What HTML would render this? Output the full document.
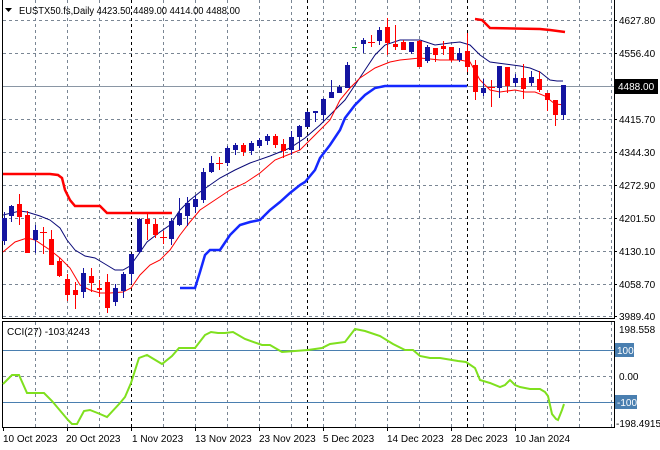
<!DOCTYPE html>
<html><head><meta charset="utf-8"><style>
html,body{margin:0;padding:0;background:#fff;width:660px;height:450px;overflow:hidden}
svg{display:block;font-family:"Liberation Sans",sans-serif}
</style></head><body>
<svg width="660" height="450" viewBox="0 0 660 450" xmlns="http://www.w3.org/2000/svg">
<rect width="660" height="450" fill="#fff"/>
<g stroke="#7a8694" stroke-width="1" stroke-dasharray="3,3" fill="none">
<path d="M35.5 0V317M67.5 0V317M99.5 0V317M163.5 0V317M195.5 0V317M227.5 0V317M259.5 0V317M291.5 0V317M323.5 0V317M355.5 0V317M387.5 0V317M419.5 0V317M451.5 0V317M483.5 0V317M515.5 0V317M547.5 0V317M579.5 0V317M611.5 0V317"/>
<path d="M3 20.5H614M3 53.5H614M3 119.5H614M3 152.5H614M3 185.5H614M3 218.5H614M3 251.5H614M3 284.5H614M3 316.5H614"/>
<path d="M35.5 322V427M67.5 322V427M99.5 322V427M163.5 322V427M195.5 322V427M227.5 322V427M259.5 322V427M291.5 322V427M323.5 322V427M355.5 322V427M387.5 322V427M419.5 322V427M451.5 322V427M483.5 322V427M515.5 322V427M547.5 322V427M579.5 322V427M611.5 322V427"/>
<path d="M3 376.5H614"/>
</g>
<g stroke="#000" stroke-dasharray="3,3"><path d="M131.5 0V317M307.5 0V317M467.5 0V317M131.5 322V427M307.5 322V427M467.5 322V427"/></g>
<path d="M3 86.5H614" stroke="#8a96a4" stroke-width="1"/>
<path d="M3 350.5H614M3 402.5H614" stroke="#4a7fb0" stroke-width="1"/>
<path d="M2.5 0V318.5H614.5V0" fill="none" stroke="#000"/>
<rect x="2.5" y="321.5" width="612" height="106" fill="none" stroke="#000"/>
<polyline fill="none" stroke="#f00" stroke-width="2.5" points="3,174 50,174 58,175 62,178 65,190 70,200 75,206 100,206 107,213 172,213"/>
<polyline fill="none" stroke="#f00" stroke-width="2.5" points="475,19 482,20 490,28 540,29 550,30 565,32"/>
<polyline fill="none" stroke="#1428ff" stroke-width="2.5" points="180,288 195,288 200,272 205,255 210,250 220,250 230,235 240,225 250,222 260,220 270,210 280,202 290,193 300,185 305,182 315,170 320,158 330,145 340,130 345,118 355,105 365,95 375,88 385,86 467,86"/>
<polyline fill="none" stroke="#0a0a78" stroke-width="1" points="3,215 20,211 27,212 40,216 50,220 60,228 67,240 75,250 85,256 95,258 105,264 115,270 123,270 130,266 138,255 147,242 160,232 170,225 180,210 190,200 200,192 210,185 220,178 235,170 250,163 270,156 290,148 305,138 320,125 335,110 345,100 355,85 365,70 375,55 385,45 400,40 420,40 435,45 450,43 460,42 470,45 480,55 490,62 505,64 520,66 530,68 540,72 550,80 557,81 563,81"/>
<polyline fill="none" stroke="#f00" stroke-width="1" points="3,252 15,242 27,238 35,240 50,250 60,258 70,268 80,285 90,290 100,293 110,293 123,292 131,288 140,275 150,265 160,260 170,250 180,235 190,222 200,210 215,200 230,190 245,183 260,173 275,160 290,154 300,150 315,135 330,120 340,100 350,88 360,78 375,68 390,62 400,60 420,58 440,60 460,60 470,62 480,80 490,90 500,92 515,90 525,92 535,92 545,96 555,104 565,105"/>
<g stroke="#1414a0" fill="#1414a0">
<path d="M4.5 212V245M11.5 205V222M35.5 225V253M83.5 268V298M115.5 284V306M123.5 272V298M131.5 254V284M139.5 218V253M171.5 218V245M179.5 198V226M187.5 197V226M195.5 195V213M203.5 168V203M211.5 156V173M227.5 146V166M235.5 143V155M251.5 141V155M259.5 138V148M267.5 134V145M291.5 131V155M299.5 125V150M307.5 111V127M315.5 111V122M323.5 98V121M331.5 80V98M339.5 85V93M347.5 62V88M363.5 38V53M379.5 27V45M411.5 42V54M427.5 45V63M459.5 48V62M483.5 79V96M499.5 66V98M515.5 74V87M531.5 71V86M563.5 85V120"/>
<g stroke="none">
<rect x="2" y="218" width="5" height="23"/><rect x="9" y="206" width="5" height="10"/><rect x="33" y="230" width="5" height="10"/>
<rect x="81" y="273" width="5" height="19"/><rect x="113" y="288" width="5" height="14"/><rect x="121" y="274" width="5" height="17"/>
<rect x="129" y="254" width="5" height="20"/><rect x="137" y="219" width="5" height="33"/><rect x="169" y="221" width="5" height="18"/>
<rect x="177" y="213" width="5" height="12"/><rect x="185" y="203" width="5" height="13"/><rect x="193" y="199" width="5" height="8"/>
<rect x="201" y="172" width="5" height="28"/><rect x="209" y="163" width="5" height="9"/><rect x="225" y="148" width="5" height="15"/>
<rect x="233" y="145" width="5" height="5"/><rect x="249" y="143" width="5" height="8"/><rect x="257" y="140" width="5" height="6"/>
<rect x="265" y="136" width="5" height="5"/><rect x="289" y="137" width="5" height="13"/><rect x="297" y="126" width="5" height="11"/>
<rect x="305" y="112" width="5" height="15"/><rect x="313" y="111" width="5" height="2"/><rect x="321" y="99" width="5" height="16"/>
<rect x="329" y="92" width="5" height="6"/><rect x="337" y="87" width="5" height="6"/><rect x="345" y="65" width="5" height="23"/>
<rect x="361" y="40" width="5" height="4"/><rect x="377" y="30" width="5" height="11"/><rect x="409" y="42" width="5" height="10"/>
<rect x="425" y="47" width="5" height="14"/><rect x="457" y="53" width="5" height="7"/><rect x="481" y="88" width="5" height="5"/>
<rect x="497" y="66" width="5" height="22"/><rect x="513" y="78" width="5" height="5"/><rect x="529" y="77" width="5" height="6"/>
<rect x="561" y="85" width="5" height="30"/>
</g></g>
<g stroke="#f00" fill="#f00">
<path d="M19.5 194V225M27.5 211V253M43.5 227V254M51.5 230V265M59.5 258V277M67.5 274V301M75.5 282V309M91.5 268V292M99.5 280V297M107.5 274V313M147.5 214V240M155.5 219V238M163.5 231V244M219.5 157V170M243.5 143V156M275.5 134V148M283.5 139V158M371.5 35V47M387.5 18V55M395.5 25V50M403.5 40V50M419.5 40V67M435.5 48V62M443.5 41V55M451.5 47V62M467.5 33V72M475.5 60V100M491.5 80V107M507.5 67V93M523.5 64V99M539.5 71V92M547.5 93V111M555.5 100V126"/>
<path d="M40 232.5H47M160 237.5H167M216 163.5H223M368 42.5H375M488 87.5H495"/>
<g stroke="none">
<rect x="17" y="204" width="5" height="13"/><rect x="25" y="215" width="5" height="38"/><rect x="49" y="239" width="5" height="26"/>
<rect x="57" y="261" width="5" height="15"/><rect x="65" y="279" width="5" height="16"/><rect x="73" y="290" width="5" height="5"/>
<rect x="89" y="276" width="5" height="7"/><rect x="97" y="288" width="5" height="2"/><rect x="105" y="282" width="5" height="26"/>
<rect x="145" y="219" width="5" height="5"/><rect x="153" y="224" width="5" height="11"/><rect x="241" y="145" width="5" height="7"/>
<rect x="273" y="136" width="5" height="9"/><rect x="281" y="144" width="5" height="7"/><rect x="385" y="27" width="5" height="16"/>
<rect x="393" y="44" width="5" height="3"/><rect x="401" y="42" width="5" height="8"/><rect x="417" y="41" width="5" height="26"/>
<rect x="433" y="48" width="5" height="7"/><rect x="441" y="46" width="5" height="3"/><rect x="449" y="47" width="5" height="13"/>
<rect x="465" y="51" width="5" height="16"/><rect x="473" y="65" width="5" height="27"/><rect x="505" y="67" width="5" height="19"/>
<rect x="521" y="78" width="5" height="11"/><rect x="537" y="79" width="5" height="11"/><rect x="545" y="93" width="5" height="7"/>
<rect x="553" y="100" width="5" height="15"/>
</g></g>
<path d="M352 47.5H357" stroke="#2a2"/>
<polyline fill="none" stroke="#7fe01e" stroke-width="2" points="3,384 12,375 19,375 27,393 44,393 52,401 68,420 72,424 77,424 84,411 90,410 100,414 107,417 120,403 125,397 131,383 139,358 147,355 162,364 172,356 179,348 195,348 205,335 211,332 218,333 225,333 233,332 245,339 262,345 270,345 282,352 295,351 308,350 322,348 330,344 345,342 355,329 365,331 380,336 393,344 405,350 413,350 420,356 430,358 440,358 458,361 466,362 475,368 480,380 490,383 500,387 505,385 510,380 515,385 520,387 530,389 540,389 545,392 548,396 552,414 556,419 558,420 562,410 564,404"/>
<path d="M5 8H12L8.5 12Z" fill="#000"/>
<text x="19" y="14" font-size="10" fill="#000" textLength="221" lengthAdjust="spacingAndGlyphs">EUSTX50.fs,Daily  4423.50 4489.00 4414.00 4488.00</text>
<text x="7" y="335" font-size="10" fill="#000">CCI(27) -103.4243</text>
<g font-size="10" fill="#000">
<text x="619" y="24">4627.80</text><text x="619" y="57">4556.40</text><text x="619" y="123">4415.70</text>
<text x="619" y="156">4344.30</text><text x="619" y="189">4272.90</text><text x="619" y="222">4201.50</text>
<text x="619" y="255">4130.10</text><text x="619" y="288">4058.70</text><text x="619" y="320">3989.40</text>
<text x="619" y="333">198.558</text><text x="619" y="380">0.00</text><text x="616" y="427">-198.4915</text>
</g>
<g stroke="#000"><path d="M614 20.5h3M614 53.5h3M614 86.5h3M614 119.5h3M614 152.5h3M614 185.5h3M614 218.5h3M614 251.5h3M614 284.5h3M614 316.5h3"/></g>
<rect x="615" y="79" width="43" height="15" fill="#000"/>
<text x="618" y="90" font-size="10" fill="#fff">4488.00</text>
<rect x="615" y="343" width="19" height="14" fill="#4a7fb0"/><text x="617" y="354" font-size="10" fill="#fff">100</text>
<rect x="615" y="395" width="22" height="14" fill="#4a7fb0"/><text x="617" y="406" font-size="10" fill="#fff">-100</text>
<g stroke="#000"><path d="M3.5 428v3M67.5 428v3M131.5 428v3M195.5 428v3M259.5 428v3M323.5 428v3M387.5 428v3M451.5 428v3M515.5 428v3"/></g>
<g font-size="10" fill="#000">
<text x="3" y="442">10 Oct 2023</text><text x="66" y="442">20 Oct 2023</text><text x="132" y="442">1 Nov 2023</text>
<text x="195" y="442">13 Nov 2023</text><text x="259" y="442">23 Nov 2023</text><text x="323" y="442">5 Dec 2023</text>
<text x="387" y="442">14 Dec 2023</text><text x="451" y="442">28 Dec 2023</text><text x="515" y="442">10 Jan 2024</text>
</g>
</svg>
</body></html>
